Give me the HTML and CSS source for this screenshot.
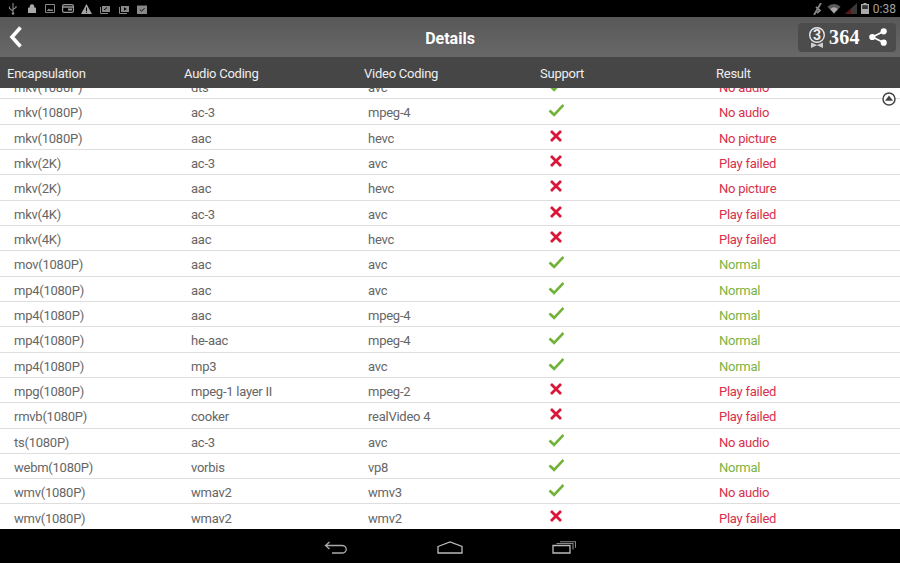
FILE: index.html
```html
<!DOCTYPE html>
<html lang="en">

<head>
    <meta charset="UTF-8">
    <meta name="viewport" content="width=device-width, initial-scale=1.0">
    <title>Details</title>
    <link rel="stylesheet" href="styles.css">
</head>

<body>
    <svg class="defs" width="0" height="0">
        <symbol id="ok" viewBox="0 0 16 14"><path d="M1.500 7.500l4.600 4.300L15.500 2" fill="none" stroke="#71b338" stroke-width="2.600"/></symbol>
        <symbol id="bad" viewBox="0 0 14 14"><path d="M2 2l10 10M12 2L2 12" fill="none" stroke="#dc1438" stroke-width="2.800"/></symbol>
    </svg>

    <div class="status-bar">
        <div class="status-left">
            <svg width="10" height="12" viewBox="0 0 10 12"><path d="M5 0v11M5 8L1.500 5.500V3.500M5 6.500l3-2V3" fill="none" stroke="#888" stroke-width="1.100"/><circle cx="5" cy="10.500" r="1.300" fill="#888"/></svg>
            <svg width="8" height="9" viewBox="0 0 8 9"><path d="M0 4h8v5H0zM2 4V2.500a2 2 0 0 1 4 0V4" fill="#aaa" stroke="#aaa" stroke-width=".7"/></svg>
            <svg width="10" height="9" viewBox="0 0 10 9"><path d="M.5.500h9v8h-9z" fill="none" stroke="#888"/><path d="M2 6.500l2-2 1 1h3v1.500H2z" fill="#888"/></svg>
            <svg width="12" height="9" viewBox="0 0 12 9"><rect x=".6" y=".6" width="10.800" height="7.800" rx="1.500" fill="none" stroke="#999" stroke-width="1.200"/><path d="M1 3h10" stroke="#999" stroke-width="1.500"/><rect x="6" y="4.500" width="4" height="2" fill="#999"/></svg>
            <svg width="11" height="10" viewBox="0 0 11 10"><path d="M5.500 0L11 10H0z" fill="#a5a5a5"/><path d="M5.500 3.500v3.500M5.500 7.800v1" stroke="#000" stroke-width="1.100"/></svg>
            <svg width="10" height="10" viewBox="0 0 10 10"><path d="M2 2h8v6H2z" fill="#888"/><path d="M.5 3v6.500H8" fill="none" stroke="#888"/><path d="M4 6l3-2.500" stroke="#000"/></svg>
            <svg width="10" height="10" viewBox="0 0 10 10"><path d="M2 2h8v6H2z" fill="#888"/><path d="M.5 3v6.500H8" fill="none" stroke="#888"/><path d="M5 3.200v3.600L7.800 5z" fill="#000"/></svg>
            <svg width="10" height="11" viewBox="0 0 10 11"><path d="M0 2.500h10V11H0z" fill="#888"/><path d="M3 2.500V.8h4v1.700M2.800 6.500l1.700 1.700 3-3" fill="none" stroke="#000" stroke-width=".9"/></svg>
        </div>
        <div class="status-right">
            <svg width="10" height="12" viewBox="0 0 10 12"><path d="M1 12L8 0M3 4l4 3.500-3 2.500" fill="none" stroke="#888" stroke-width="1.800"/></svg>
            <svg width="14" height="11" viewBox="0 0 15 11"><path d="M.5 3.500a10 10 0 0 1 14 0L7.500 11z" fill="#5c5c5c"/><path d="M3.500 6a6 6 0 0 1 8 0L7.500 10.500z" fill="#aaa"/></svg>
            <svg width="12" height="11" viewBox="0 0 12 11"><path d="M0 11L12 0v11z" fill="#3a3a3a"/><path d="M0 11l6-5.500V11z" fill="#5a1616"/></svg>
            <svg width="8" height="11" viewBox="0 0 8 11"><path d="M2.500 0h3v1H8v10H0V1h2.500z" fill="#aaa"/><path d="M1.200 2.200h5.600v3.800H1.200z" fill="#333"/></svg>
            <span class="clock">0:38</span>
        </div>
    </div>

    <div class="title-bar">
        <svg class="back" width="14" height="24" viewBox="0 0 14 24"><path d="M11.500 2.500L3 12l8.500 9.500" fill="none" stroke="#fff" stroke-width="3.600"/></svg>
        <h1>Details</h1>
        <div class="score">
            <svg class="medal" width="18" height="21" viewBox="0 0 18 21">
                <circle cx="9" cy="8" r="7.300" fill="none" stroke="#e8e8e8" stroke-width="1.400"/>
                <text x="9" y="13" text-anchor="middle" class="medal-num">3</text>
                <path d="M3 15.500V21l6-2.800 6 2.800v-5.500l-6 2.600z" fill="#cfcfcf"/>
            </svg>
            <span class="score-num">364</span>
            <svg class="share" width="18" height="18" viewBox="0 0 18 18">
                <path d="M14.500 3.500L3.500 9l11 5.500" fill="none" stroke="#fff" stroke-width="1.700"/>
                <circle cx="14.700" cy="3.300" r="3.100" fill="#fff"/>
                <circle cx="3.300" cy="9" r="3.100" fill="#fff"/>
                <circle cx="14.700" cy="14.700" r="3.100" fill="#fff"/>
            </svg>
        </div>
    </div>

    <div class="head-row">
        <span>Encapsulation</span>
        <span>Audio Coding</span>
        <span>Video Coding</span>
        <span>Support</span>
        <span>Result</span>
    </div>

    <div class="list">
        <div class="rows">
            <div class="row"><span>mkv(1080P)</span><span>dts</span><span>avc</span><svg class="mark"><use href="#ok"/></svg><span class="fail">No audio</span></div>
            <div class="row"><span>mkv(1080P)</span><span>ac-3</span><span>mpeg-4</span><svg class="mark"><use href="#ok"/></svg><span class="fail">No audio</span></div>
            <div class="row"><span>mkv(1080P)</span><span>aac</span><span>hevc</span><svg class="mark"><use href="#bad"/></svg><span class="fail">No picture</span></div>
            <div class="row"><span>mkv(2K)</span><span>ac-3</span><span>avc</span><svg class="mark"><use href="#bad"/></svg><span class="fail">Play failed</span></div>
            <div class="row"><span>mkv(2K)</span><span>aac</span><span>hevc</span><svg class="mark"><use href="#bad"/></svg><span class="fail">No picture</span></div>
            <div class="row"><span>mkv(4K)</span><span>ac-3</span><span>avc</span><svg class="mark"><use href="#bad"/></svg><span class="fail">Play failed</span></div>
            <div class="row"><span>mkv(4K)</span><span>aac</span><span>hevc</span><svg class="mark"><use href="#bad"/></svg><span class="fail">Play failed</span></div>
            <div class="row"><span>mov(1080P)</span><span>aac</span><span>avc</span><svg class="mark"><use href="#ok"/></svg><span class="normal">Normal</span></div>
            <div class="row"><span>mp4(1080P)</span><span>aac</span><span>avc</span><svg class="mark"><use href="#ok"/></svg><span class="normal">Normal</span></div>
            <div class="row"><span>mp4(1080P)</span><span>aac</span><span>mpeg-4</span><svg class="mark"><use href="#ok"/></svg><span class="normal">Normal</span></div>
            <div class="row"><span>mp4(1080P)</span><span>he-aac</span><span>mpeg-4</span><svg class="mark"><use href="#ok"/></svg><span class="normal">Normal</span></div>
            <div class="row"><span>mp4(1080P)</span><span>mp3</span><span>avc</span><svg class="mark"><use href="#ok"/></svg><span class="normal">Normal</span></div>
            <div class="row"><span>mpg(1080P)</span><span>mpeg-1 layer II</span><span>mpeg-2</span><svg class="mark"><use href="#bad"/></svg><span class="fail">Play failed</span></div>
            <div class="row"><span>rmvb(1080P)</span><span>cooker</span><span>realVideo 4</span><svg class="mark"><use href="#bad"/></svg><span class="fail">Play failed</span></div>
            <div class="row"><span>ts(1080P)</span><span>ac-3</span><span>avc</span><svg class="mark"><use href="#ok"/></svg><span class="fail">No audio</span></div>
            <div class="row"><span>webm(1080P)</span><span>vorbis</span><span>vp8</span><svg class="mark"><use href="#ok"/></svg><span class="normal">Normal</span></div>
            <div class="row"><span>wmv(1080P)</span><span>wmav2</span><span>wmv3</span><svg class="mark"><use href="#ok"/></svg><span class="fail">No audio</span></div>
            <div class="row"><span>wmv(1080P)</span><span>wmav2</span><span>wmv2</span><svg class="mark"><use href="#bad"/></svg><span class="fail">Play failed</span></div>
        </div>
        <svg class="to-top" width="14" height="14" viewBox="0 0 14 14"><circle cx="7" cy="7" r="6" fill="#fff" stroke="#444" stroke-width="1.500"/><path d="M7 3.500L11 8.800H3z" fill="#444"/></svg>
    </div>

    <div class="nav-bar">
        <svg width="24" height="13" viewBox="0 0 24 13"><path d="M5.500 1L1.500 4.500l4 3.500M1.500 4.500H18a4.200 3.700 0 0 1 0 7.500H8" fill="none" stroke="#aaa" stroke-width="1.300"/></svg>
        <svg width="26" height="13" viewBox="0 0 26 13"><path d="M1 5.500L13 1l12 4.500V12H1z" fill="none" stroke="#bbb" stroke-width="1.300"/></svg>
        <svg width="24" height="13" viewBox="0 0 24 13"><path d="M1 4.500h17v7.500H1z" fill="none" stroke="#bbb" stroke-width="1.300"/><path d="M4.500 2.500H21v6M8 .7h15.500v6" fill="none" stroke="#888" stroke-width="1.100"/></svg>
    </div>
</body>

</html>
```

FILE: styles.css
```css
/* Page */
body {
    margin: 0;
    width: 900px;
    height: 563px;
    overflow: hidden;
    display: flex;
    flex-direction: column;
    font-family: Roboto, "Liberation Sans", sans-serif;
    background-color: #fff;
}

.defs {
    position: absolute;
}

/* Status Bar */
.status-bar {
    height: 17px;
    flex: none;
    background-color: #000;
    display: flex;
    align-items: center;
    justify-content: space-between;
    padding: 0 4px;
}

.status-left {
    display: grid;
    grid-auto-flow: column;
    grid-auto-columns: 18.4px;
    justify-items: center;
    align-items: center;
}

.status-right {
    display: flex;
    align-items: center;
    gap: 4px;
}

.clock {
    color: #a0a0a0;
    font-size: 12px;
}

/* Title Bar */
.title-bar {
    height: 40px;
    flex: none;
    position: relative;
    display: flex;
    align-items: center;
    justify-content: center;
    padding-top: 2px;
    box-sizing: border-box;
    background: linear-gradient(#585858, #686868);
}

.title-bar h1 {
    margin: 0;
    color: #fff;
    font-size: 16px;
    font-weight: 700;
}

.back {
    position: absolute;
    left: 9px;
    top: 8px;
}

.score {
    position: absolute;
    right: 4px;
    top: 6px;
    width: 98px;
    height: 29px;
    box-sizing: border-box;
    padding: 0 0 1px 10px;
    display: flex;
    align-items: center;
    background-color: #4c4c4c;
    border-radius: 4px;
}

.medal {
    flex: none;
    margin-right: 3px;
}

.share {
    flex: none;
    margin-left: 9px;
}

.score-num {
    flex: none;
    width: 31px;
    color: #fff;
    font-family: "Liberation Serif", serif;
    font-size: 20px;
    font-weight: 700;
    letter-spacing: 0.3px;
}

.medal-num {
    fill: #eee;
    font-size: 14px;
    font-weight: 700;
}

/* Table Heading */
.head-row {
    height: 31px;
    flex: none;
    box-sizing: border-box;
    display: grid;
    grid-template-columns: 177px 180px 176px 176px 1fr;
    align-items: center;
    padding: 2px 0 0 7px;
    background-color: #464646;
    color: #eee;
    font-size: 13px;
    letter-spacing: -0.25px;
}

/* List */
.list {
    flex: 1;
    overflow: hidden;
    position: relative;
}

.rows {
    margin-top: -14.1px;
}

.row {
    height: 25.33px;
    box-sizing: border-box;
    display: grid;
    grid-template-columns: 177px 177px 180px 171px 1fr;
    align-items: center;
    padding-left: 14px;
    padding-top: 3px;
    border-bottom: 1px solid #dedede;
    color: #666;
    font-size: 13px;
    letter-spacing: -0.25px;
}

.mark {
    width: 16px;
    height: 14px;
    margin-top: -5px;
}

.fail {
    color: #d8304c;
}

.normal {
    color: #7cb342;
}

.to-top {
    position: absolute;
    right: 4px;
    top: 4px;
}

/* Navigation Bar */
.nav-bar {
    height: 34px;
    flex: none;
    background-color: #000;
    display: flex;
    align-items: center;
    justify-content: center;
    gap: 89px;
    padding-top: 2px;
    box-sizing: border-box;
}
```
